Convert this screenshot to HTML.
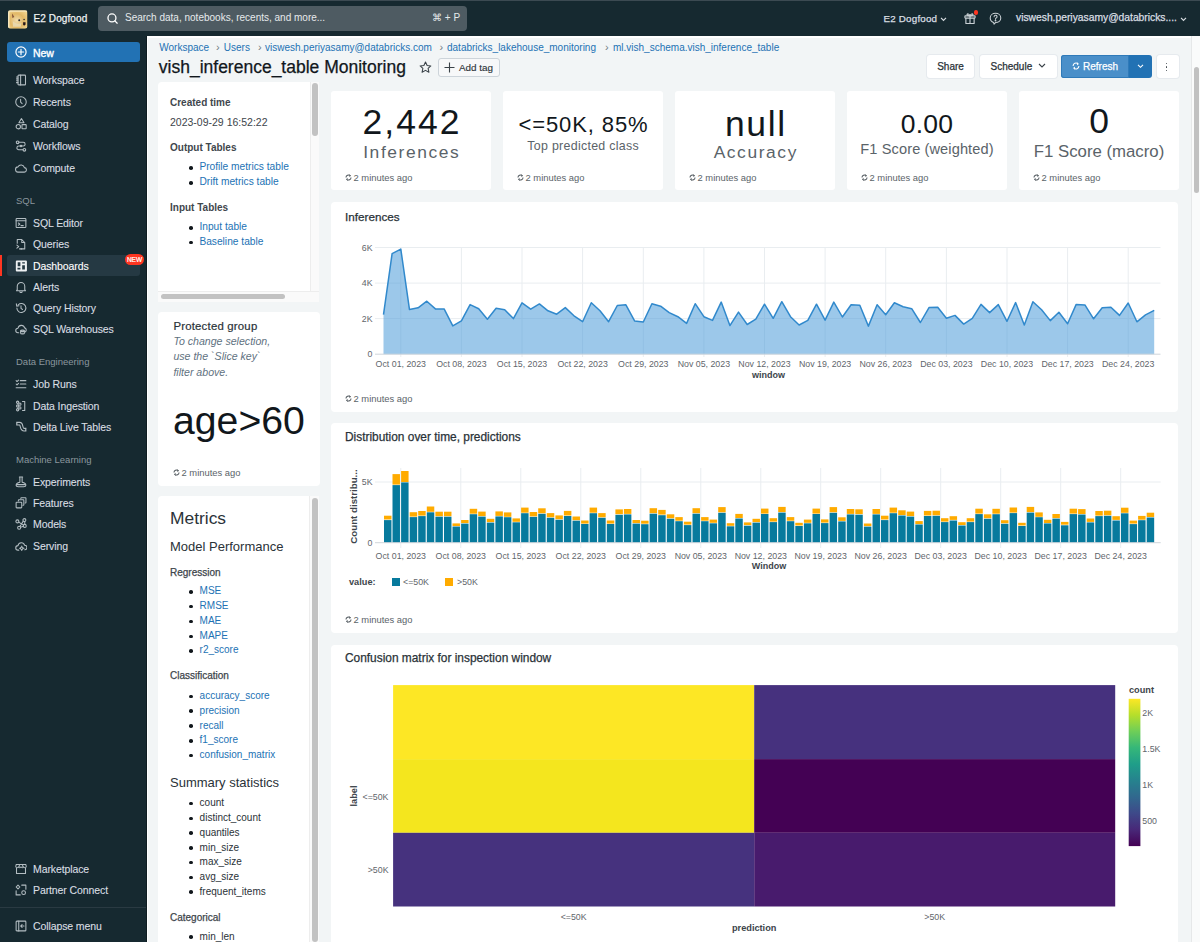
<!DOCTYPE html>
<html><head><meta charset="utf-8">
<style>
*{box-sizing:border-box;margin:0;padding:0}
html,body{width:1200px;height:942px;overflow:hidden}
body{font-family:"Liberation Sans",sans-serif;background:#162930;position:relative;color:#11171c}
.abs{position:absolute}
#top{left:0;top:0;width:1200px;height:36px;background:#162930;border-top:1px solid #3c4a52}
#side{left:0;top:36px;width:147px;height:906px;background:#162930;border-right:1.5px solid #0e1c21}
#main{left:147px;top:36px;width:1045px;height:906px;background:#f2f5f6;border-top:2px solid #fff;border-left:1.5px solid #fff}
#vscroll{left:1191px;top:36px;width:9px;height:906px;background:#fafbfb;border-left:1px solid #e6e8e9}
.txt{position:absolute;white-space:nowrap;line-height:1}
.nav{position:absolute;left:33px;font-size:10.5px;color:#d9dee2;white-space:nowrap;line-height:12px;letter-spacing:-0.1px}
.sec{position:absolute;left:16px;font-size:9.5px;color:#8b979e;white-space:nowrap;line-height:12px}
.ico{position:absolute;left:16px;width:12px;height:12px}
.ico svg{width:12px;height:12px;display:block}
.panel{position:absolute;background:#fff;border-radius:4px}
.link{color:#2272b4}
.med{-webkit-text-stroke-width:0.25px}
.nav{-webkit-text-stroke-width:0.1px}
</style></head><body>
<!-- TOP BAR -->
<div id="top" class="abs">
  <svg class="abs" style="left:8px;top:8.5px" width="19.5" height="19" viewBox="0 0 20 19"><defs><clipPath id="dc"><rect width="20" height="19" rx="2.5"/></clipPath><radialGradient id="dg" cx="45%" cy="55%" r="65%"><stop offset="0" stop-color="#efdcae"/><stop offset=".55" stop-color="#e2b866"/><stop offset="1" stop-color="#f0d48e"/></radialGradient></defs><g clip-path="url(#dc)"><rect width="20" height="19" fill="url(#dg)"/><path d="M0 0h20v1.5H0zM0 0h1.5v19H0z" fill="#f6e7bf"/><path d="M4 3l2.5 4-2 1z" fill="#6d3a2a" opacity=".8"/><path d="M5 11c2 2 5 4 9 2l-1 4H5z" fill="#e9dcb8" opacity=".8"/><circle cx="11.5" cy="10.3" r="1" fill="#2a2a30"/><circle cx="16.5" cy="9.5" r=".8" fill="#2a2a30"/><path d="M15.5 12.2h2.5v2.5c-.5 1-2 1.2-2.5.3z" fill="#25161a"/></g></svg>
  <div class="txt med" style="left:33.5px;top:12.5px;font-size:10px;letter-spacing:0.1px;color:#eef1f3">E2 Dogfood</div>
  <div class="abs" style="left:98px;top:5px;width:369px;height:25px;border-radius:4px;background:#4e5b62"></div>
  <div class="txt" style="left:125px;top:12px;font-size:10px;color:#e6eaec">Search data, notebooks, recents, and more...</div>
  <div class="txt" style="left:432px;top:12px;font-size:10px;color:#e6eaec">⌘ + P</div>
  <div class="txt med" style="left:883.5px;top:13px;font-size:9.8px;letter-spacing:0.2px;color:#d9dee2">E2 Dogfood</div>
  <div class="txt med" style="left:1016px;top:12px;font-size:10.3px;color:#d9dee2">viswesh.periyasamy@databricks....</div>
  <svg class="abs" style="left:107px;top:11.5px" width="11" height="11" viewBox="0 0 16 16" fill="none" stroke="#fff" stroke-width="1.9"><circle cx="7.2" cy="7.2" r="5.8"/><path d="M11.5 11.5l3.3 3.3" stroke-linecap="round"/></svg>
  <svg class="abs" style="left:939.5px;top:15.5px" width="7" height="5" viewBox="0 0 8 6" fill="none" stroke="#d9dee2" stroke-width="1.4"><path d="M1 1l3 3 3-3"/></svg>
  <svg class="abs" style="left:963.5px;top:11px" width="12" height="12.5" viewBox="0 0 16 16.5" fill="none" stroke="#c9d0d4" stroke-width="1.5" stroke-linejoin="round"><rect x="1.2" y="5" width="13.6" height="3" rx=".6"/><path d="M2.5 8v7.3h11V8M8 5v10.3"/><path d="M8 5C7 2.5 4 1.5 4 3.3 4 4.5 6 5 8 5zM8 5c1-2.5 4-3.5 4-1.7C12 4.5 10 5 8 5z"/></svg>
  <div class="abs" style="left:973.8px;top:9.4px;width:4.4px;height:4.4px;border-radius:50%;background:#ff3621"></div>
  <svg class="abs" style="left:989px;top:10.6px" width="13" height="13" viewBox="0 0 16 16" fill="none" stroke="#c9d0d4" stroke-width="1.3" stroke-linejoin="round"><path d="M8 1.5c3.6 0 6.5 2.5 6.5 5.8S11.6 13 8 13l-1.8 2-0.6-2.2C3.2 12 1.5 9.9 1.5 7.3 1.5 4 4.4 1.5 8 1.5z"/><path d="M6.3 5.8a1.8 1.8 0 1 1 2.5 1.6c-.5.3-.8.6-.8 1.2v.4" stroke-linecap="round"/><circle cx="8" cy="10.6" r=".5" fill="#c9d0d4"/></svg>
  <svg class="abs" style="left:1180px;top:15.5px" width="7" height="5" viewBox="0 0 8 6" fill="none" stroke="#d9dee2" stroke-width="1.4"><path d="M1 1l3 3 3-3"/></svg>

</div>
<!-- SIDEBAR -->
<div id="side" class="abs"></div>
<div class="abs" style="left:7px;top:42px;width:133px;height:20px;border-radius:3px;background:#2272b4"></div>
<svg class="abs" style="left:15px;top:46px" width="12" height="12" viewBox="0 0 16 16" fill="none" stroke="#fff" stroke-width="1.6" stroke-linecap="round"><circle cx="8" cy="8" r="6.8"/><path d="M8 4.5v7M4.5 8h7"/></svg>
<div class="nav" style="top:46.5px;color:#fff;font-size:10.5px;-webkit-text-stroke-width:0.35px">New</div>
<div class="abs" style="left:7px;top:255px;width:133px;height:21px;border-radius:3px;background:#253943"></div>
<div class="abs" style="left:0;top:255px;width:2px;height:21px;background:#ff3621"></div>
<div class="abs" style="left:125px;top:254px;width:19px;height:11px;border-radius:6px;background:#ff3621;color:#fff;font-size:6.5px;line-height:11px;text-align:center;-webkit-text-stroke-width:0.2px">NEW</div>
<svg class="abs" style="left:15px;top:73.7px" width="12" height="12" viewBox="0 0 16 16" fill="none" stroke="#b3bdc2" stroke-width="1.4" stroke-linecap="round" stroke-linejoin="round"><rect x="4" y="1.5" width="10" height="13" rx="1"/><path d="M7.5 1.5v13M2 4h2M2 6.5h2M2 9h2M2 11.5h2"/></svg>
<div class="nav" style="top:73.7px;color:#d9dee2">Workspace</div>
<svg class="abs" style="left:15px;top:96.0px" width="12" height="12" viewBox="0 0 16 16" fill="none" stroke="#b3bdc2" stroke-width="1.4" stroke-linecap="round" stroke-linejoin="round"><circle cx="8" cy="8" r="7"/><path d="M7.5 4.5v3.8l2 1.8"/></svg>
<div class="nav" style="top:96.0px;color:#d9dee2">Recents</div>
<svg class="abs" style="left:15px;top:118.0px" width="12" height="12" viewBox="0 0 16 16" fill="none" stroke="#b3bdc2" stroke-width="1.4" stroke-linecap="round" stroke-linejoin="round"><path d="M8.6 0.8l3.4 5.6H5.2z"/><circle cx="4.4" cy="11.6" r="2.9"/><rect x="9.3" y="8.8" width="5.6" height="5.6" rx=".6"/></svg>
<div class="nav" style="top:118.0px;color:#d9dee2">Catalog</div>
<svg class="abs" style="left:15px;top:140.0px" width="12" height="12" viewBox="0 0 16 16" fill="none" stroke="#b3bdc2" stroke-width="1.4" stroke-linecap="round" stroke-linejoin="round"><circle cx="3.5" cy="3" r="1.8"/><circle cx="12.5" cy="13" r="1.8"/><circle cx="8" cy="8" r="1"/><path d="M5.3 3H11a2.5 2.5 0 0 1 0 5H5a2.5 2.5 0 0 0 0 5h5.7"/></svg>
<div class="nav" style="top:140.0px;color:#d9dee2">Workflows</div>
<svg class="abs" style="left:15px;top:162.0px" width="12" height="12" viewBox="0 0 16 16" fill="none" stroke="#b3bdc2" stroke-width="1.4" stroke-linecap="round" stroke-linejoin="round"><path d="M4.5 13.5h7.5a3 3 0 0 0 .5-6A4.5 4.5 0 0 0 4 6.5a3.5 3.5 0 0 0 .5 7z"/></svg>
<div class="nav" style="top:162.0px;color:#d9dee2">Compute</div>
<svg class="abs" style="left:15px;top:216.5px" width="12" height="12" viewBox="0 0 16 16" fill="none" stroke="#b3bdc2" stroke-width="1.4" stroke-linecap="round" stroke-linejoin="round"><rect x="1.5" y="2" width="13" height="12" rx="1"/><path d="M1.5 5h13M4.5 8l2 1.5-2 1.5M8 11.5h3"/></svg>
<div class="nav" style="top:216.5px;color:#d9dee2">SQL Editor</div>
<svg class="abs" style="left:15px;top:238.0px" width="12" height="12" viewBox="0 0 16 16" fill="none" stroke="#b3bdc2" stroke-width="1.4" stroke-linecap="round" stroke-linejoin="round"><path d="M3 7V2h6l4 4v8.5H8M9 2v4h4"/><path d="M2.5 9.5l2.5 2-2.5 2M6 14.5h3"/></svg>
<div class="nav" style="top:238.0px;color:#d9dee2">Queries</div>
<svg class="abs" style="left:15px;top:259.6px" width="12" height="12" viewBox="0 0 16 16" fill="none" stroke="#e8ecef" stroke-width="1.4" stroke-linecap="round" stroke-linejoin="round"><path fill="#eef1f3" stroke="none" fill-rule="evenodd" d="M2.5 0.6h12a1.4 1.4 0 0 1 1.4 1.4v12a1.4 1.4 0 0 1-1.4 1.4h-12A1.4 1.4 0 0 1 1.1 14V2A1.4 1.4 0 0 1 2.5 0.6z M3.6 3h3.6v5.4H3.6z M3.3 10.3h3.9v2.3H3.3z M9.6 3h3.6v1.8H9.6z M9.6 7h3.6v5.6H9.6z"/></svg>
<div class="nav" style="top:259.6px;color:#fff">Dashboards</div>
<svg class="abs" style="left:15px;top:281.0px" width="12" height="12" viewBox="0 0 16 16" fill="none" stroke="#b3bdc2" stroke-width="1.4" stroke-linecap="round" stroke-linejoin="round"><path d="M3 11.5V7a5 5 0 0 1 10 0v4.5l1 1.5H2z"/><path d="M6.5 14a1.5 1.5 0 0 0 3 0"/></svg>
<div class="nav" style="top:281.0px;color:#d9dee2">Alerts</div>
<svg class="abs" style="left:15px;top:302.4px" width="12" height="12" viewBox="0 0 16 16" fill="none" stroke="#b3bdc2" stroke-width="1.4" stroke-linecap="round" stroke-linejoin="round"><path d="M2.5 8a6 6 0 1 0 1.8-4.3"/><path d="M1.8 2.5l.5 3 3-.5M8 5v3.5l2 1.5"/></svg>
<div class="nav" style="top:302.4px;color:#d9dee2">Query History</div>
<svg class="abs" style="left:15px;top:323.0px" width="12" height="12" viewBox="0 0 16 16" fill="none" stroke="#b3bdc2" stroke-width="1.4" stroke-linecap="round" stroke-linejoin="round"><path d="M5 13H4a3 3 0 0 1 0-6 4.5 4.5 0 0 1 8.8-.5A3 3 0 0 1 13.5 12"/><ellipse cx="10" cy="10.5" rx="2.5" ry="1"/><path d="M7.5 10.5v3c0 .6 1.1 1 2.5 1s2.5-.4 2.5-1v-3"/></svg>
<div class="nav" style="top:323.0px;color:#d9dee2">SQL Warehouses</div>
<svg class="abs" style="left:15px;top:378.0px" width="12" height="12" viewBox="0 0 16 16" fill="none" stroke="#b3bdc2" stroke-width="1.4" stroke-linecap="round" stroke-linejoin="round"><path d="M1.5 3.5l1.2 1.2 2-2M7 3.5h7.5M1.5 8l1.2 1.2 2-2M7 8h7.5M1.5 13h13"/></svg>
<div class="nav" style="top:378.0px;color:#d9dee2">Job Runs</div>
<svg class="abs" style="left:15px;top:399.6px" width="12" height="12" viewBox="0 0 16 16" fill="none" stroke="#b3bdc2" stroke-width="1.4" stroke-linecap="round" stroke-linejoin="round"><circle cx="3.5" cy="3" r="1.5"/><circle cx="6.5" cy="5.5" r="1.5"/><circle cx="3.5" cy="8" r="1.5"/><circle cx="6.5" cy="10.5" r="1.5"/><circle cx="3.5" cy="13" r="1.5"/><path d="M10 2h3v12h-3"/></svg>
<div class="nav" style="top:399.6px;color:#d9dee2">Data Ingestion</div>
<svg class="abs" style="left:15px;top:421.0px" width="12" height="12" viewBox="0 0 16 16" fill="none" stroke="#b3bdc2" stroke-width="1.4" stroke-linecap="round" stroke-linejoin="round"><path d="M1.6 3.6H6.3C8.3 3.6 8.4 5.8 9 8.2 9.6 10.6 10 11.6 12.2 11.6H15.2" stroke-width="5" stroke-linecap="butt" stroke-linejoin="round"/><path d="M3.2 3.6H6.3C8.3 3.6 8.4 5.8 9 8.2 9.6 10.6 10 11.6 12.2 11.6H13.6" stroke="#162930" stroke-width="2.1" stroke-linecap="butt"/></svg>
<div class="nav" style="top:421.0px;color:#d9dee2">Delta Live Tables</div>
<svg class="abs" style="left:15px;top:475.6px" width="12" height="12" viewBox="0 0 16 16" fill="none" stroke="#b3bdc2" stroke-width="1.4" stroke-linecap="round" stroke-linejoin="round"><path d="M5.8 1.2h4.4M6.5 1.2v7.2C3.5 9 1.5 10.5 1.5 12.3c0 1.3 1.2 1.9 3 1.9h7c1.8 0 3-.6 3-1.9 0-1.8-2-3.3-5-3.9V1.2"/><path d="M2 11.5h12"/></svg>
<div class="nav" style="top:475.6px;color:#d9dee2">Experiments</div>
<svg class="abs" style="left:15px;top:497.0px" width="12" height="12" viewBox="0 0 16 16" fill="none" stroke="#b3bdc2" stroke-width="1.4" stroke-linecap="round" stroke-linejoin="round"><rect x="1.5" y="7" width="7.5" height="7.5" rx=".8"/><path d="M4.5 5.2V4.5a.8.8 0 0 1 .8-.8H11a.8.8 0 0 1 .8.8v5.8a.8.8 0 0 1-.8.8h-.5"/><path d="M7.8 2V1.8a.8.8 0 0 1 .8-.8h5.2a.8.8 0 0 1 .8.8v5.4a.8.8 0 0 1-.8.8h-.3"/></svg>
<div class="nav" style="top:497.0px;color:#d9dee2">Features</div>
<svg class="abs" style="left:15px;top:518.4px" width="12" height="12" viewBox="0 0 16 16" fill="none" stroke="#b3bdc2" stroke-width="1.4" stroke-linecap="round" stroke-linejoin="round"><circle cx="3.2" cy="4.5" r="2"/><circle cx="12.5" cy="2.8" r="2"/><circle cx="13" cy="10.5" r="2"/><circle cx="5.5" cy="13" r="2"/><path d="M5 5.5l6.2 4M11 4.2L6.5 11.3M13 4.8v3.7M7.4 12.4l3.8-1.3"/></svg>
<div class="nav" style="top:518.4px;color:#d9dee2">Models</div>
<svg class="abs" style="left:15px;top:539.8px" width="12" height="12" viewBox="0 0 16 16" fill="none" stroke="#b3bdc2" stroke-width="1.4" stroke-linecap="round" stroke-linejoin="round"><path d="M5 13.5H4a3 3 0 0 1 0-6 4.5 4.5 0 0 1 8.8-.5A3 3 0 0 1 13 13"/><circle cx="9" cy="11" r="1.7"/><path d="M9 8v1.3M9 12.7V14M6 11h1.3M10.7 11H12"/></svg>
<div class="nav" style="top:539.8px;color:#d9dee2">Serving</div>
<svg class="abs" style="left:15px;top:862.5px" width="12" height="12" viewBox="0 0 16 16" fill="none" stroke="#b3bdc2" stroke-width="1.4" stroke-linecap="round" stroke-linejoin="round"><path d="M2 6.5V14h12V6.5M1.5 2h13l.5 3a1.8 1.8 0 0 1-3.5 0 1.8 1.8 0 0 1-3.5 0 1.8 1.8 0 0 1-3.5 0 1.8 1.8 0 0 1-3.5 0z"/><path d="M6 2L5.5 5M10 2l.5 3"/></svg>
<div class="nav" style="top:862.5px;color:#d9dee2">Marketplace</div>
<svg class="abs" style="left:15px;top:884.4px" width="12" height="12" viewBox="0 0 16 16" fill="none" stroke="#b3bdc2" stroke-width="1.4" stroke-linecap="round" stroke-linejoin="round"><path d="M4 1.5l2.5 2.5L4 6.5 1.5 4z"/><circle cx="11.5" cy="11.5" r="2.5"/><path d="M9 1.5h5.5V7M1.5 9v5.5H7"/></svg>
<div class="nav" style="top:884.4px;color:#d9dee2">Partner Connect</div>
<svg class="abs" style="left:15px;top:919.5px" width="12" height="12" viewBox="0 0 16 16" fill="none" stroke="#b3bdc2" stroke-width="1.4" stroke-linecap="round" stroke-linejoin="round"><rect x="1.5" y="1.5" width="13" height="13" rx="1"/><path d="M5 1.5v13M12 8H7.5M9.5 6L7.5 8l2 2"/></svg>
<div class="nav" style="top:919.5px;color:#d9dee2">Collapse menu</div>
<div class="sec" style="top:194.7px">SQL</div>
<div class="sec" style="top:356.0px">Data Engineering</div>
<div class="sec" style="top:453.5px">Machine Learning</div>
<div class="abs" style="left:0;top:907px;width:146px;height:1px;background:#2a3a42"></div>
<!-- MAIN -->
<div id="main" class="abs"></div>
<div class="txt " style="left:159.3px;top:43.0px;font-size:10px;color:#2272b4;font-weight:normal;">Workspace</div>
<div class="txt " style="left:223.8px;top:43.0px;font-size:10px;color:#2272b4;font-weight:normal;">Users</div>
<div class="txt " style="left:265.0px;top:43.0px;font-size:10px;color:#2272b4;font-weight:normal;">viswesh.periyasamy@databricks.com</div>
<div class="txt " style="left:447.0px;top:43.0px;font-size:10px;color:#2272b4;font-weight:normal;">databricks_lakehouse_monitoring</div>
<div class="txt " style="left:613.0px;top:43.0px;font-size:10px;color:#2272b4;font-weight:normal;">ml.vish_schema.vish_inference_table</div>
<div class="txt " style="left:216.0px;top:42.1px;font-size:11px;color:#6f7b82;font-weight:normal;">›</div>
<div class="txt " style="left:258.0px;top:42.1px;font-size:11px;color:#6f7b82;font-weight:normal;">›</div>
<div class="txt " style="left:439.5px;top:42.1px;font-size:11px;color:#6f7b82;font-weight:normal;">›</div>
<div class="txt " style="left:605.0px;top:42.1px;font-size:11px;color:#6f7b82;font-weight:normal;">›</div>
<div class="txt med" style="left:158.8px;top:59.0px;font-size:17.5px;color:#11171c;font-weight:normal;">vish_inference_table Monitoring</div>
<svg class="abs" style="left:419px;top:61px" width="13" height="13" viewBox="0 0 16 16" fill="none" stroke="#3a4248" stroke-width="1.3" stroke-linejoin="round"><path d="M8 1.3l2 4.3 4.6.5-3.4 3.1 1 4.6L8 11.5l-4.2 2.3 1-4.6L1.4 6.1 6 5.6z"/></svg>
<div class="abs" style="left:437.5px;top:58.3px;width:62.5px;height:18.4px;border:1px solid #cdd4da;border-radius:3px;background:#f7f8f9"></div>
<svg class="abs" style="left:444px;top:61.5px" width="11" height="11" viewBox="0 0 11 11" stroke="#3a4248" stroke-width="1.1"><path d="M5.5 0.5v10M0.5 5.5h10"/></svg>
<div class="txt " style="left:459.0px;top:62.6px;font-size:9.9px;color:#2a3238;font-weight:normal;-webkit-text-stroke-width:0.12px">Add tag</div>
<div class="abs" style="left:927px;top:55px;width:47px;height:22.5px;background:#fff;border-radius:3px;box-shadow:0 0 0 1px #e6eaee"></div>
<div class="txt med" style="left:750.5px;width:400px;text-align:center;top:62.0px;font-size:10px;color:#2a3238;font-weight:normal;">Share</div>
<div class="abs" style="left:980px;top:55px;width:77px;height:22.5px;background:#fff;border-radius:3px;box-shadow:0 0 0 1px #e6eaee"></div>
<div class="txt med" style="left:990.5px;top:62.0px;font-size:10px;color:#2a3238;font-weight:normal;">Schedule</div>
<svg class="abs" style="left:1038px;top:63px" width="8" height="6" viewBox="0 0 8 6" fill="none" stroke="#3a4248" stroke-width="1.1"><path d="M1 1l3 3 3-3"/></svg>
<div class="abs" style="left:1061px;top:54.5px;width:68px;height:23px;background:#4a8fc9;border-radius:3px 0 0 3px;box-shadow:inset 0 0 0 1px #2f7ab9"></div>
<div class="abs" style="left:1129px;top:54.5px;width:23px;height:23px;background:#2272b4;border-radius:0 3px 3px 0"></div>
<svg class="abs" style="left:1072px;top:62px" width="8" height="8" viewBox="0 0 16 16" fill="none" stroke="#fff" stroke-width="2.2"><path d="M13.8 8A5.8 5.8 0 0 1 4 12.2M2.2 8A5.8 5.8 0 0 1 12 3.8"/><path d="M10.2 1.5l2.6 2.4-2.8 2.1M5.8 14.5L3.2 12.1 6 10" stroke-width="2"/></svg>
<div class="txt med" style="left:1083.0px;top:62.1px;font-size:10px;color:#ffffff;font-weight:normal;">Refresh</div>
<svg class="abs" style="left:1137px;top:63.5px" width="7" height="5" viewBox="0 0 8 6" fill="none" stroke="#fff" stroke-width="1.3"><path d="M1 1l3 3 3-3"/></svg>
<div class="abs" style="left:1156.5px;top:55px;width:22px;height:22.5px;background:#fff;border-radius:3px;box-shadow:0 0 0 1px #e6eaee"></div>
<div class="abs" style="left:1165.8px;top:62.5px;width:1.6px;height:1.6px;background:#3a4248;border-radius:1px"></div>
<div class="abs" style="left:1165.8px;top:66px;width:1.6px;height:1.6px;background:#3a4248;border-radius:1px"></div>
<div class="abs" style="left:1165.8px;top:69.5px;width:1.6px;height:1.6px;background:#3a4248;border-radius:1px"></div>
<div class="abs" style="left:158px;top:82px;width:161px;height:219.5px;background:#fff;border-radius:4px 4px 0 0"></div>
<div class="abs" style="left:309.5px;top:82px;width:9.5px;height:209px;background:#fafafa;border-left:1px solid #ededed"></div>
<div class="abs" style="left:312px;top:82.5px;width:5.5px;height:53.5px;background:#c2c2c2;border-radius:3px"></div>
<div class="abs" style="left:158px;top:291px;width:161px;height:10.5px;background:#fafafa;border-top:1px solid #ededed"></div>
<div class="abs" style="left:160.5px;top:294px;width:124.5px;height:5px;background:#c2c2c2;border-radius:3px"></div>
<div class="txt " style="left:170.0px;top:97.5px;font-size:10px;color:#3f474d;font-weight:bold;">Created time</div>
<div class="txt " style="left:170.0px;top:117.2px;font-size:10.5px;color:#3d454b;font-weight:normal;">2023-09-29 16:52:22</div>
<div class="txt " style="left:170.0px;top:142.6px;font-size:10px;color:#3f474d;font-weight:bold;">Output Tables</div>
<div class="abs" style="left:189.2px;top:166.2px;width:3.6px;height:3.6px;background:#11171c;border-radius:50%"></div>
<div class="txt " style="left:199.4px;top:162.4px;font-size:10.2px;color:#2272b4;font-weight:normal;">Profile metrics table</div>
<div class="abs" style="left:189.2px;top:181.1px;width:3.6px;height:3.6px;background:#11171c;border-radius:50%"></div>
<div class="txt " style="left:199.4px;top:177.3px;font-size:10.2px;color:#2272b4;font-weight:normal;">Drift metrics table</div>
<div class="txt " style="left:170.0px;top:203.0px;font-size:10px;color:#3f474d;font-weight:bold;">Input Tables</div>
<div class="abs" style="left:189.2px;top:226.0px;width:3.6px;height:3.6px;background:#11171c;border-radius:50%"></div>
<div class="txt " style="left:199.4px;top:222.2px;font-size:10.2px;color:#2272b4;font-weight:normal;">Input table</div>
<div class="abs" style="left:189.2px;top:240.89999999999998px;width:3.6px;height:3.6px;background:#11171c;border-radius:50%"></div>
<div class="txt " style="left:199.4px;top:237.1px;font-size:10.2px;color:#2272b4;font-weight:normal;">Baseline table</div>
<div class="abs" style="left:158px;top:312px;width:161.5px;height:173.5px;background:#fff;border-radius:4px"></div>
<div class="txt " style="left:173.4px;letter-spacing:0.2px;top:321.1px;font-size:11.4px;color:#2a3238;font-weight:normal;-webkit-text-stroke-width:0.2px">Protected group</div>
<div class="txt " style="left:173.4px;top:336.1px;font-size:10.6px;color:#5f7281;font-weight:normal;font-style:italic">To change selection,</div>
<div class="txt " style="left:173.4px;top:351.0px;font-size:10.6px;color:#5f7281;font-weight:normal;font-style:italic">use the `Slice key`</div>
<div class="txt " style="left:173.4px;top:366.5px;font-size:10.6px;color:#5f7281;font-weight:normal;font-style:italic">filter above.</div>
<div class="txt " style="left:173.0px;top:401.4px;font-size:39.2px;color:#11171c;font-weight:normal;">age&gt;60</div>
<svg class="abs" style="left:172.5px;top:468.79999999999995px" width="7" height="7" viewBox="0 0 16 16" fill="none" stroke="#50585e" stroke-width="2.3"><path d="M13.8 8A5.8 5.8 0 0 1 4 12.2M2.2 8A5.8 5.8 0 0 1 12 3.8"/><path d="M10.2 1.5l2.6 2.4-2.8 2.1M5.8 14.5L3.2 12.1 6 10" stroke-width="2"/></svg>
<div class="txt " style="left:181.5px;top:467.7px;font-size:9.4px;color:#5a6369;font-weight:normal;">2 minutes ago</div>
<div class="abs" style="left:158px;top:496px;width:161px;height:446px;background:#fff;border-radius:4px 4px 0 0"></div>
<div class="abs" style="left:309px;top:496px;width:10px;height:446px;background:#fafafa;border-left:1px solid #ededed"></div>
<div class="abs" style="left:312px;top:498px;width:5.5px;height:444px;background:#c2c2c2;border-radius:3px"></div>
<div class="txt " style="left:170.0px;top:510.1px;font-size:17.4px;color:#2a3238;font-weight:normal;">Metrics</div>
<div class="txt " style="left:170.0px;top:540.1px;font-size:13px;color:#2a3238;font-weight:normal;">Model Performance</div>
<div class="txt med" style="left:170.0px;top:567.5px;font-size:10px;color:#3d454b;font-weight:normal;">Regression</div>
<div class="abs" style="left:189.2px;top:590.0px;width:3.6px;height:3.6px;background:#11171c;border-radius:50%"></div>
<div class="txt " style="left:199.6px;top:586.3px;font-size:10px;color:#2272b4;font-weight:normal;">MSE</div>
<div class="abs" style="left:189.2px;top:604.7px;width:3.6px;height:3.6px;background:#11171c;border-radius:50%"></div>
<div class="txt " style="left:199.6px;top:601.0px;font-size:10px;color:#2272b4;font-weight:normal;">RMSE</div>
<div class="abs" style="left:189.2px;top:619.8000000000001px;width:3.6px;height:3.6px;background:#11171c;border-radius:50%"></div>
<div class="txt " style="left:199.6px;top:616.1px;font-size:10px;color:#2272b4;font-weight:normal;">MAE</div>
<div class="abs" style="left:189.2px;top:634.5px;width:3.6px;height:3.6px;background:#11171c;border-radius:50%"></div>
<div class="txt " style="left:199.6px;top:630.8px;font-size:10px;color:#2272b4;font-weight:normal;">MAPE</div>
<div class="abs" style="left:189.2px;top:649.1px;width:3.6px;height:3.6px;background:#11171c;border-radius:50%"></div>
<div class="txt " style="left:199.6px;top:645.4px;font-size:10px;color:#2272b4;font-weight:normal;">r2_score</div>
<div class="txt med" style="left:170.0px;top:671.3px;font-size:10px;color:#3d454b;font-weight:normal;">Classification</div>
<div class="abs" style="left:189.2px;top:694.5px;width:3.6px;height:3.6px;background:#11171c;border-radius:50%"></div>
<div class="txt " style="left:199.6px;top:690.8px;font-size:10px;color:#2272b4;font-weight:normal;">accuracy_score</div>
<div class="abs" style="left:189.2px;top:709.4000000000001px;width:3.6px;height:3.6px;background:#11171c;border-radius:50%"></div>
<div class="txt " style="left:199.6px;top:705.7px;font-size:10px;color:#2272b4;font-weight:normal;">precision</div>
<div class="abs" style="left:189.2px;top:724.2px;width:3.6px;height:3.6px;background:#11171c;border-radius:50%"></div>
<div class="txt " style="left:199.6px;top:720.5px;font-size:10px;color:#2272b4;font-weight:normal;">recall</div>
<div class="abs" style="left:189.2px;top:739.0px;width:3.6px;height:3.6px;background:#11171c;border-radius:50%"></div>
<div class="txt " style="left:199.6px;top:735.3px;font-size:10px;color:#2272b4;font-weight:normal;">f1_score</div>
<div class="abs" style="left:189.2px;top:753.7px;width:3.6px;height:3.6px;background:#11171c;border-radius:50%"></div>
<div class="txt " style="left:199.6px;top:750.0px;font-size:10px;color:#2272b4;font-weight:normal;">confusion_matrix</div>
<div class="txt " style="left:170.0px;top:775.7px;font-size:13px;color:#2a3238;font-weight:normal;">Summary statistics</div>
<div class="abs" style="left:189.2px;top:801.8000000000001px;width:3.6px;height:3.6px;background:#11171c;border-radius:50%"></div>
<div class="txt " style="left:199.6px;top:798.1px;font-size:10px;color:#2a3238;font-weight:normal;">count</div>
<div class="abs" style="left:189.2px;top:816.7px;width:3.6px;height:3.6px;background:#11171c;border-radius:50%"></div>
<div class="txt " style="left:199.6px;top:813.0px;font-size:10px;color:#2a3238;font-weight:normal;">distinct_count</div>
<div class="abs" style="left:189.2px;top:831.4000000000001px;width:3.6px;height:3.6px;background:#11171c;border-radius:50%"></div>
<div class="txt " style="left:199.6px;top:827.7px;font-size:10px;color:#2a3238;font-weight:normal;">quantiles</div>
<div class="abs" style="left:189.2px;top:846.3000000000001px;width:3.6px;height:3.6px;background:#11171c;border-radius:50%"></div>
<div class="txt " style="left:199.6px;top:842.6px;font-size:10px;color:#2a3238;font-weight:normal;">min_size</div>
<div class="abs" style="left:189.2px;top:860.9000000000001px;width:3.6px;height:3.6px;background:#11171c;border-radius:50%"></div>
<div class="txt " style="left:199.6px;top:857.2px;font-size:10px;color:#2a3238;font-weight:normal;">max_size</div>
<div class="abs" style="left:189.2px;top:875.7px;width:3.6px;height:3.6px;background:#11171c;border-radius:50%"></div>
<div class="txt " style="left:199.6px;top:872.0px;font-size:10px;color:#2a3238;font-weight:normal;">avg_size</div>
<div class="abs" style="left:189.2px;top:890.4000000000001px;width:3.6px;height:3.6px;background:#11171c;border-radius:50%"></div>
<div class="txt " style="left:199.6px;top:886.7px;font-size:10px;color:#2a3238;font-weight:normal;">frequent_items</div>
<div class="txt med" style="left:170.0px;top:913.1px;font-size:10px;color:#3d454b;font-weight:normal;">Categorical</div>
<div class="abs" style="left:189.2px;top:935.3000000000001px;width:3.6px;height:3.6px;background:#11171c;border-radius:50%"></div>
<div class="txt " style="left:199.6px;top:931.6px;font-size:10px;color:#2a3238;font-weight:normal;">min_len</div>
<div class="abs" style="left:330.5px;top:91px;width:160.5px;height:99.3px;background:#fff;border-radius:3px"></div>
<svg class="abs" style="left:345.0px;top:174.1px" width="7" height="7" viewBox="0 0 16 16" fill="none" stroke="#50585e" stroke-width="2.3"><path d="M13.8 8A5.8 5.8 0 0 1 4 12.2M2.2 8A5.8 5.8 0 0 1 12 3.8"/><path d="M10.2 1.5l2.6 2.4-2.8 2.1M5.8 14.5L3.2 12.1 6 10" stroke-width="2"/></svg>
<div class="txt " style="left:353.5px;top:173.0px;font-size:9.4px;color:#5a6369;font-weight:normal;">2 minutes ago</div>
<div class="abs" style="left:502.5px;top:91px;width:160.5px;height:99.3px;background:#fff;border-radius:3px"></div>
<svg class="abs" style="left:517.0px;top:174.1px" width="7" height="7" viewBox="0 0 16 16" fill="none" stroke="#50585e" stroke-width="2.3"><path d="M13.8 8A5.8 5.8 0 0 1 4 12.2M2.2 8A5.8 5.8 0 0 1 12 3.8"/><path d="M10.2 1.5l2.6 2.4-2.8 2.1M5.8 14.5L3.2 12.1 6 10" stroke-width="2"/></svg>
<div class="txt " style="left:525.5px;top:173.0px;font-size:9.4px;color:#5a6369;font-weight:normal;">2 minutes ago</div>
<div class="abs" style="left:674.5px;top:91px;width:160.5px;height:99.3px;background:#fff;border-radius:3px"></div>
<svg class="abs" style="left:689.0px;top:174.1px" width="7" height="7" viewBox="0 0 16 16" fill="none" stroke="#50585e" stroke-width="2.3"><path d="M13.8 8A5.8 5.8 0 0 1 4 12.2M2.2 8A5.8 5.8 0 0 1 12 3.8"/><path d="M10.2 1.5l2.6 2.4-2.8 2.1M5.8 14.5L3.2 12.1 6 10" stroke-width="2"/></svg>
<div class="txt " style="left:697.5px;top:173.0px;font-size:9.4px;color:#5a6369;font-weight:normal;">2 minutes ago</div>
<div class="abs" style="left:846.5px;top:91px;width:160.5px;height:99.3px;background:#fff;border-radius:3px"></div>
<svg class="abs" style="left:861.0px;top:174.1px" width="7" height="7" viewBox="0 0 16 16" fill="none" stroke="#50585e" stroke-width="2.3"><path d="M13.8 8A5.8 5.8 0 0 1 4 12.2M2.2 8A5.8 5.8 0 0 1 12 3.8"/><path d="M10.2 1.5l2.6 2.4-2.8 2.1M5.8 14.5L3.2 12.1 6 10" stroke-width="2"/></svg>
<div class="txt " style="left:869.5px;top:173.0px;font-size:9.4px;color:#5a6369;font-weight:normal;">2 minutes ago</div>
<div class="abs" style="left:1018.5px;top:91px;width:160.5px;height:99.3px;background:#fff;border-radius:3px"></div>
<svg class="abs" style="left:1033.0px;top:174.1px" width="7" height="7" viewBox="0 0 16 16" fill="none" stroke="#50585e" stroke-width="2.3"><path d="M13.8 8A5.8 5.8 0 0 1 4 12.2M2.2 8A5.8 5.8 0 0 1 12 3.8"/><path d="M10.2 1.5l2.6 2.4-2.8 2.1M5.8 14.5L3.2 12.1 6 10" stroke-width="2"/></svg>
<div class="txt " style="left:1041.5px;top:173.0px;font-size:9.4px;color:#5a6369;font-weight:normal;">2 minutes ago</div>
<div class="txt" style="left:330.5px;width:161px;text-align:center;top:105.3px;font-size:35.5px;letter-spacing:2px;text-indent:2px;color:#11171c">2,442</div>
<div class="txt" style="left:330.5px;width:161px;text-align:center;top:143.5px;font-size:17.4px;letter-spacing:1.6px;text-indent:1.6px;color:#5a6369">Inferences</div>
<div class="txt" style="left:502.5px;width:161px;text-align:center;top:114.3px;font-size:22px;letter-spacing:0.9px;text-indent:0.9px;color:#11171c">&lt;=50K, 85%</div>
<div class="txt" style="left:502.5px;width:161px;text-align:center;top:139.5px;font-size:12.4px;letter-spacing:0.3px;text-indent:0.3px;color:#5a6369">Top predicted class</div>
<div class="txt" style="left:674.5px;width:161px;text-align:center;top:107px;font-size:35.5px;letter-spacing:1.6px;text-indent:1.6px;color:#11171c">null</div>
<div class="txt" style="left:674.5px;width:161px;text-align:center;top:143.5px;font-size:17.4px;letter-spacing:1.6px;text-indent:1.6px;color:#5a6369">Accuracy</div>
<div class="txt" style="left:846.5px;width:161px;text-align:center;top:111px;font-size:26.5px;letter-spacing:0.2px;color:#11171c">0.00</div>
<div class="txt" style="left:846.5px;width:161px;text-align:center;top:142px;font-size:14.6px;letter-spacing:0.1px;color:#5a6369">F1 Score (weighted)</div>
<div class="txt" style="left:1018.5px;width:161px;text-align:center;top:103.5px;font-size:35.5px;color:#11171c">0</div>
<div class="txt" style="left:1018.5px;width:161px;text-align:center;top:143.5px;font-size:16.8px;color:#5a6369">F1 Score (macro)</div>
<div class="abs" style="left:330.5px;top:201.5px;width:847.8px;height:210.5px;background:#fff;border-radius:4px"></div>
<div class="txt med" style="left:345.0px;top:210.7px;font-size:11.7px;color:#2a3238;font-weight:normal;">Inferences</div>
<svg class="abs" style="left:345px;top:394.59999999999997px" width="7" height="7" viewBox="0 0 16 16" fill="none" stroke="#50585e" stroke-width="2.3"><path d="M13.8 8A5.8 5.8 0 0 1 4 12.2M2.2 8A5.8 5.8 0 0 1 12 3.8"/><path d="M10.2 1.5l2.6 2.4-2.8 2.1M5.8 14.5L3.2 12.1 6 10" stroke-width="2"/></svg>
<div class="txt " style="left:353.5px;top:393.5px;font-size:9.4px;color:#5a6369;font-weight:normal;">2 minutes ago</div>
<div class="abs" style="left:330.5px;top:423px;width:847.8px;height:209.5px;background:#fff;border-radius:4px"></div>
<div class="txt med" style="left:345.0px;top:431.6px;font-size:11.9px;color:#2a3238;font-weight:normal;">Distribution over time, predictions</div>
<svg class="abs" style="left:345px;top:615.6999999999999px" width="7" height="7" viewBox="0 0 16 16" fill="none" stroke="#50585e" stroke-width="2.3"><path d="M13.8 8A5.8 5.8 0 0 1 4 12.2M2.2 8A5.8 5.8 0 0 1 12 3.8"/><path d="M10.2 1.5l2.6 2.4-2.8 2.1M5.8 14.5L3.2 12.1 6 10" stroke-width="2"/></svg>
<div class="txt " style="left:353.5px;top:614.6px;font-size:9.4px;color:#5a6369;font-weight:normal;">2 minutes ago</div>
<div class="abs" style="left:330.5px;top:644.5px;width:847.8px;height:300px;background:#fff;border-radius:4px"></div>
<div class="txt med" style="left:345.0px;top:652.8px;font-size:11.9px;color:#2a3238;font-weight:normal;">Confusion matrix for inspection window</div>
<svg class="abs" style="left:0;top:0" width="1200" height="942" viewBox="0 0 1200 942" font-family="Liberation Sans, sans-serif">
<line x1="375" x2="1160.5" y1="318.6" y2="318.6" stroke="#e9edf0" stroke-width="1"/>
<line x1="375" x2="1160.5" y1="283.1" y2="283.1" stroke="#e9edf0" stroke-width="1"/>
<line x1="375" x2="1160.5" y1="247.5" y2="247.5" stroke="#e9edf0" stroke-width="1"/>
<line x1="400.8" x2="400.8" y1="247.5" y2="357" stroke="#e9edf0" stroke-width="1"/>
<line x1="461.4" x2="461.4" y1="247.5" y2="357" stroke="#e9edf0" stroke-width="1"/>
<line x1="522.0" x2="522.0" y1="247.5" y2="357" stroke="#e9edf0" stroke-width="1"/>
<line x1="582.6" x2="582.6" y1="247.5" y2="357" stroke="#e9edf0" stroke-width="1"/>
<line x1="643.3" x2="643.3" y1="247.5" y2="357" stroke="#e9edf0" stroke-width="1"/>
<line x1="703.9" x2="703.9" y1="247.5" y2="357" stroke="#e9edf0" stroke-width="1"/>
<line x1="764.5" x2="764.5" y1="247.5" y2="357" stroke="#e9edf0" stroke-width="1"/>
<line x1="825.1" x2="825.1" y1="247.5" y2="357" stroke="#e9edf0" stroke-width="1"/>
<line x1="885.7" x2="885.7" y1="247.5" y2="357" stroke="#e9edf0" stroke-width="1"/>
<line x1="946.4" x2="946.4" y1="247.5" y2="357" stroke="#e9edf0" stroke-width="1"/>
<line x1="1007.0" x2="1007.0" y1="247.5" y2="357" stroke="#e9edf0" stroke-width="1"/>
<line x1="1067.6" x2="1067.6" y1="247.5" y2="357" stroke="#e9edf0" stroke-width="1"/>
<line x1="1128.2" x2="1128.2" y1="247.5" y2="357" stroke="#e9edf0" stroke-width="1"/>
<polygon points="383.5,354.2 383.5,314.7 392.1,253.7 400.8,249.1 409.5,309.6 418.1,307.8 426.8,301.2 435.4,308.9 444.1,308.9 452.8,325.9 461.4,320.9 470.1,304.6 478.7,308.7 487.4,319.2 496.1,308.3 504.7,309.7 513.4,318.6 522.0,302.8 530.7,309.2 539.4,303.9 548.0,310.8 556.7,314.2 565.3,307.6 574.0,315.8 582.6,321.7 591.3,302.8 600.0,310.8 608.6,321.7 617.3,305.5 625.9,304.8 634.6,320.9 643.3,322.0 651.9,303.7 660.6,306.2 669.2,312.6 677.9,316.7 686.6,323.4 695.2,303.7 703.9,316.7 712.5,320.4 721.2,302.1 729.9,325.6 738.5,312.1 747.2,324.5 755.8,319.2 764.5,304.2 773.2,318.3 781.8,301.7 790.5,316.7 799.1,325.0 807.8,320.4 816.5,304.2 825.1,320.1 833.8,302.1 842.4,317.0 851.1,304.8 859.8,305.3 868.4,326.1 877.1,304.8 885.7,314.7 894.4,302.8 903.1,306.7 911.7,308.7 920.4,322.5 929.0,307.6 937.7,307.3 946.4,318.3 955.0,315.4 963.7,324.1 972.3,318.3 981.0,304.4 989.6,312.6 998.3,304.6 1007.0,321.3 1015.6,302.6 1024.3,325.0 1032.9,301.7 1041.6,309.7 1050.3,320.6 1058.9,312.2 1067.6,323.8 1076.2,304.4 1084.9,304.9 1093.6,318.8 1102.2,307.8 1110.9,307.3 1119.5,315.4 1128.2,303.0 1136.9,321.8 1145.5,314.9 1154.2,310.3 1154.2,354.2" fill="#4a9ad8" fill-opacity="0.55"/>
<polyline points="383.5,314.7 392.1,253.7 400.8,249.1 409.5,309.6 418.1,307.8 426.8,301.2 435.4,308.9 444.1,308.9 452.8,325.9 461.4,320.9 470.1,304.6 478.7,308.7 487.4,319.2 496.1,308.3 504.7,309.7 513.4,318.6 522.0,302.8 530.7,309.2 539.4,303.9 548.0,310.8 556.7,314.2 565.3,307.6 574.0,315.8 582.6,321.7 591.3,302.8 600.0,310.8 608.6,321.7 617.3,305.5 625.9,304.8 634.6,320.9 643.3,322.0 651.9,303.7 660.6,306.2 669.2,312.6 677.9,316.7 686.6,323.4 695.2,303.7 703.9,316.7 712.5,320.4 721.2,302.1 729.9,325.6 738.5,312.1 747.2,324.5 755.8,319.2 764.5,304.2 773.2,318.3 781.8,301.7 790.5,316.7 799.1,325.0 807.8,320.4 816.5,304.2 825.1,320.1 833.8,302.1 842.4,317.0 851.1,304.8 859.8,305.3 868.4,326.1 877.1,304.8 885.7,314.7 894.4,302.8 903.1,306.7 911.7,308.7 920.4,322.5 929.0,307.6 937.7,307.3 946.4,318.3 955.0,315.4 963.7,324.1 972.3,318.3 981.0,304.4 989.6,312.6 998.3,304.6 1007.0,321.3 1015.6,302.6 1024.3,325.0 1032.9,301.7 1041.6,309.7 1050.3,320.6 1058.9,312.2 1067.6,323.8 1076.2,304.4 1084.9,304.9 1093.6,318.8 1102.2,307.8 1110.9,307.3 1119.5,315.4 1128.2,303.0 1136.9,321.8 1145.5,314.9 1154.2,310.3" fill="none" stroke="#3189cc" stroke-width="1.5" stroke-linejoin="round"/>
<line x1="375" x2="1160.5" y1="354.2" y2="354.2" stroke="#cfd6db" stroke-width="1"/>
<text x="372.5" y="357.4" font-size="8.8" fill="#5f666b" text-anchor="end">0</text>
<text x="372.5" y="321.8" font-size="8.8" fill="#5f666b" text-anchor="end">2K</text>
<text x="372.5" y="286.3" font-size="8.8" fill="#5f666b" text-anchor="end">4K</text>
<text x="372.5" y="250.7" font-size="8.8" fill="#5f666b" text-anchor="end">6K</text>
<text x="400.8" y="366.5" font-size="8.8" fill="#5f666b" text-anchor="middle">Oct 01, 2023</text>
<text x="461.4" y="366.5" font-size="8.8" fill="#5f666b" text-anchor="middle">Oct 08, 2023</text>
<text x="522.0" y="366.5" font-size="8.8" fill="#5f666b" text-anchor="middle">Oct 15, 2023</text>
<text x="582.6" y="366.5" font-size="8.8" fill="#5f666b" text-anchor="middle">Oct 22, 2023</text>
<text x="643.3" y="366.5" font-size="8.8" fill="#5f666b" text-anchor="middle">Oct 29, 2023</text>
<text x="703.9" y="366.5" font-size="8.8" fill="#5f666b" text-anchor="middle">Nov 05, 2023</text>
<text x="764.5" y="366.5" font-size="8.8" fill="#5f666b" text-anchor="middle">Nov 12, 2023</text>
<text x="825.1" y="366.5" font-size="8.8" fill="#5f666b" text-anchor="middle">Nov 19, 2023</text>
<text x="885.7" y="366.5" font-size="8.8" fill="#5f666b" text-anchor="middle">Nov 26, 2023</text>
<text x="946.4" y="366.5" font-size="8.8" fill="#5f666b" text-anchor="middle">Dec 03, 2023</text>
<text x="1007.0" y="366.5" font-size="8.8" fill="#5f666b" text-anchor="middle">Dec 10, 2023</text>
<text x="1067.6" y="366.5" font-size="8.8" fill="#5f666b" text-anchor="middle">Dec 17, 2023</text>
<text x="1128.2" y="366.5" font-size="8.8" fill="#5f666b" text-anchor="middle">Dec 24, 2023</text>
<text x="768.5" y="377.7" font-size="9" font-weight="bold" fill="#3d454b" text-anchor="middle">window</text>
<line x1="375" x2="1160.7" y1="482" y2="482" stroke="#e9edf0" stroke-width="1"/>
<line x1="400.8" x2="400.8" y1="468" y2="548" stroke="#e9edf0" stroke-width="1"/>
<line x1="460.8" x2="460.8" y1="468" y2="548" stroke="#e9edf0" stroke-width="1"/>
<line x1="520.8" x2="520.8" y1="468" y2="548" stroke="#e9edf0" stroke-width="1"/>
<line x1="580.8" x2="580.8" y1="468" y2="548" stroke="#e9edf0" stroke-width="1"/>
<line x1="640.8" x2="640.8" y1="468" y2="548" stroke="#e9edf0" stroke-width="1"/>
<line x1="700.8" x2="700.8" y1="468" y2="548" stroke="#e9edf0" stroke-width="1"/>
<line x1="760.8" x2="760.8" y1="468" y2="548" stroke="#e9edf0" stroke-width="1"/>
<line x1="820.7" x2="820.7" y1="468" y2="548" stroke="#e9edf0" stroke-width="1"/>
<line x1="880.7" x2="880.7" y1="468" y2="548" stroke="#e9edf0" stroke-width="1"/>
<line x1="940.7" x2="940.7" y1="468" y2="548" stroke="#e9edf0" stroke-width="1"/>
<line x1="1000.7" x2="1000.7" y1="468" y2="548" stroke="#e9edf0" stroke-width="1"/>
<line x1="1060.7" x2="1060.7" y1="468" y2="548" stroke="#e9edf0" stroke-width="1"/>
<line x1="1120.7" x2="1120.7" y1="468" y2="548" stroke="#e9edf0" stroke-width="1"/>
<rect x="384.0" y="515.7" width="7.47" height="3.8" fill="#ffab00"/>
<rect x="384.0" y="520.1" width="7.47" height="22.6" fill="#077a9d"/>
<rect x="392.5" y="474.1" width="7.47" height="10.5" fill="#ffab00"/>
<rect x="392.5" y="485.1" width="7.47" height="57.6" fill="#077a9d"/>
<rect x="401.1" y="471.0" width="7.47" height="11.0" fill="#ffab00"/>
<rect x="401.1" y="482.4" width="7.47" height="60.3" fill="#077a9d"/>
<rect x="409.7" y="512.2" width="7.47" height="4.4" fill="#ffab00"/>
<rect x="409.7" y="517.1" width="7.47" height="25.6" fill="#077a9d"/>
<rect x="418.2" y="511.0" width="7.47" height="4.6" fill="#ffab00"/>
<rect x="418.2" y="516.1" width="7.47" height="26.6" fill="#077a9d"/>
<rect x="426.8" y="506.5" width="7.47" height="5.3" fill="#ffab00"/>
<rect x="426.8" y="512.3" width="7.47" height="30.4" fill="#077a9d"/>
<rect x="435.4" y="511.7" width="7.47" height="4.5" fill="#ffab00"/>
<rect x="435.4" y="516.7" width="7.47" height="26.0" fill="#077a9d"/>
<rect x="444.0" y="511.7" width="7.47" height="4.5" fill="#ffab00"/>
<rect x="444.0" y="516.7" width="7.47" height="26.0" fill="#077a9d"/>
<rect x="452.5" y="523.4" width="7.47" height="2.6" fill="#ffab00"/>
<rect x="452.5" y="526.5" width="7.47" height="16.2" fill="#077a9d"/>
<rect x="461.1" y="520.0" width="7.47" height="3.1" fill="#ffab00"/>
<rect x="461.1" y="523.6" width="7.47" height="19.1" fill="#077a9d"/>
<rect x="469.7" y="508.8" width="7.47" height="4.9" fill="#ffab00"/>
<rect x="469.7" y="514.2" width="7.47" height="28.5" fill="#077a9d"/>
<rect x="478.2" y="511.6" width="7.47" height="4.5" fill="#ffab00"/>
<rect x="478.2" y="516.6" width="7.47" height="26.1" fill="#077a9d"/>
<rect x="486.8" y="518.8" width="7.47" height="3.3" fill="#ffab00"/>
<rect x="486.8" y="522.6" width="7.47" height="20.1" fill="#077a9d"/>
<rect x="495.4" y="511.4" width="7.47" height="4.5" fill="#ffab00"/>
<rect x="495.4" y="516.4" width="7.47" height="26.3" fill="#077a9d"/>
<rect x="503.9" y="512.4" width="7.47" height="4.4" fill="#ffab00"/>
<rect x="503.9" y="517.2" width="7.47" height="25.5" fill="#077a9d"/>
<rect x="512.5" y="518.4" width="7.47" height="3.4" fill="#ffab00"/>
<rect x="512.5" y="522.3" width="7.47" height="20.4" fill="#077a9d"/>
<rect x="521.1" y="507.6" width="7.47" height="5.1" fill="#ffab00"/>
<rect x="521.1" y="513.2" width="7.47" height="29.5" fill="#077a9d"/>
<rect x="529.7" y="512.0" width="7.47" height="4.4" fill="#ffab00"/>
<rect x="529.7" y="516.9" width="7.47" height="25.8" fill="#077a9d"/>
<rect x="538.2" y="508.3" width="7.47" height="5.0" fill="#ffab00"/>
<rect x="538.2" y="513.8" width="7.47" height="28.9" fill="#077a9d"/>
<rect x="546.8" y="513.1" width="7.47" height="4.2" fill="#ffab00"/>
<rect x="546.8" y="517.8" width="7.47" height="24.9" fill="#077a9d"/>
<rect x="555.4" y="515.4" width="7.47" height="3.9" fill="#ffab00"/>
<rect x="555.4" y="519.8" width="7.47" height="22.9" fill="#077a9d"/>
<rect x="563.9" y="510.9" width="7.47" height="4.6" fill="#ffab00"/>
<rect x="563.9" y="516.0" width="7.47" height="26.7" fill="#077a9d"/>
<rect x="572.5" y="516.5" width="7.47" height="3.7" fill="#ffab00"/>
<rect x="572.5" y="520.7" width="7.47" height="22.0" fill="#077a9d"/>
<rect x="581.1" y="520.5" width="7.47" height="3.1" fill="#ffab00"/>
<rect x="581.1" y="524.0" width="7.47" height="18.7" fill="#077a9d"/>
<rect x="589.6" y="507.6" width="7.47" height="5.1" fill="#ffab00"/>
<rect x="589.6" y="513.2" width="7.47" height="29.5" fill="#077a9d"/>
<rect x="598.2" y="513.1" width="7.47" height="4.2" fill="#ffab00"/>
<rect x="598.2" y="517.8" width="7.47" height="24.9" fill="#077a9d"/>
<rect x="606.8" y="520.5" width="7.47" height="3.1" fill="#ffab00"/>
<rect x="606.8" y="524.0" width="7.47" height="18.7" fill="#077a9d"/>
<rect x="615.4" y="509.4" width="7.47" height="4.8" fill="#ffab00"/>
<rect x="615.4" y="514.8" width="7.47" height="27.9" fill="#077a9d"/>
<rect x="623.9" y="509.0" width="7.47" height="4.9" fill="#ffab00"/>
<rect x="623.9" y="514.4" width="7.47" height="28.3" fill="#077a9d"/>
<rect x="632.5" y="520.0" width="7.47" height="3.1" fill="#ffab00"/>
<rect x="632.5" y="523.6" width="7.47" height="19.1" fill="#077a9d"/>
<rect x="641.1" y="520.7" width="7.47" height="3.0" fill="#ffab00"/>
<rect x="641.1" y="524.2" width="7.47" height="18.5" fill="#077a9d"/>
<rect x="649.6" y="508.2" width="7.47" height="5.0" fill="#ffab00"/>
<rect x="649.6" y="513.7" width="7.47" height="29.0" fill="#077a9d"/>
<rect x="658.2" y="509.9" width="7.47" height="4.7" fill="#ffab00"/>
<rect x="658.2" y="515.2" width="7.47" height="27.5" fill="#077a9d"/>
<rect x="666.8" y="514.3" width="7.47" height="4.0" fill="#ffab00"/>
<rect x="666.8" y="518.8" width="7.47" height="23.9" fill="#077a9d"/>
<rect x="675.3" y="517.1" width="7.47" height="3.6" fill="#ffab00"/>
<rect x="675.3" y="521.2" width="7.47" height="21.5" fill="#077a9d"/>
<rect x="683.9" y="521.7" width="7.47" height="2.9" fill="#ffab00"/>
<rect x="683.9" y="525.1" width="7.47" height="17.6" fill="#077a9d"/>
<rect x="692.5" y="508.2" width="7.47" height="5.0" fill="#ffab00"/>
<rect x="692.5" y="513.7" width="7.47" height="29.0" fill="#077a9d"/>
<rect x="701.1" y="517.1" width="7.47" height="3.6" fill="#ffab00"/>
<rect x="701.1" y="521.2" width="7.47" height="21.5" fill="#077a9d"/>
<rect x="709.6" y="519.6" width="7.47" height="3.2" fill="#ffab00"/>
<rect x="709.6" y="523.3" width="7.47" height="19.4" fill="#077a9d"/>
<rect x="718.2" y="507.1" width="7.47" height="5.2" fill="#ffab00"/>
<rect x="718.2" y="512.8" width="7.47" height="29.9" fill="#077a9d"/>
<rect x="726.8" y="523.2" width="7.47" height="2.6" fill="#ffab00"/>
<rect x="726.8" y="526.3" width="7.47" height="16.4" fill="#077a9d"/>
<rect x="735.3" y="513.9" width="7.47" height="4.1" fill="#ffab00"/>
<rect x="735.3" y="518.5" width="7.47" height="24.2" fill="#077a9d"/>
<rect x="743.9" y="522.4" width="7.47" height="2.7" fill="#ffab00"/>
<rect x="743.9" y="525.7" width="7.47" height="17.0" fill="#077a9d"/>
<rect x="752.5" y="518.8" width="7.47" height="3.3" fill="#ffab00"/>
<rect x="752.5" y="522.6" width="7.47" height="20.1" fill="#077a9d"/>
<rect x="761.0" y="508.6" width="7.47" height="5.0" fill="#ffab00"/>
<rect x="761.0" y="514.0" width="7.47" height="28.7" fill="#077a9d"/>
<rect x="769.6" y="518.2" width="7.47" height="3.4" fill="#ffab00"/>
<rect x="769.6" y="522.1" width="7.47" height="20.6" fill="#077a9d"/>
<rect x="778.2" y="506.9" width="7.47" height="5.2" fill="#ffab00"/>
<rect x="778.2" y="512.6" width="7.47" height="30.1" fill="#077a9d"/>
<rect x="786.8" y="517.1" width="7.47" height="3.6" fill="#ffab00"/>
<rect x="786.8" y="521.2" width="7.47" height="21.5" fill="#077a9d"/>
<rect x="795.3" y="522.8" width="7.47" height="2.7" fill="#ffab00"/>
<rect x="795.3" y="526.0" width="7.47" height="16.7" fill="#077a9d"/>
<rect x="803.9" y="519.6" width="7.47" height="3.2" fill="#ffab00"/>
<rect x="803.9" y="523.3" width="7.47" height="19.4" fill="#077a9d"/>
<rect x="812.5" y="508.6" width="7.47" height="5.0" fill="#ffab00"/>
<rect x="812.5" y="514.0" width="7.47" height="28.7" fill="#077a9d"/>
<rect x="821.0" y="519.4" width="7.47" height="3.2" fill="#ffab00"/>
<rect x="821.0" y="523.1" width="7.47" height="19.6" fill="#077a9d"/>
<rect x="829.6" y="507.1" width="7.47" height="5.2" fill="#ffab00"/>
<rect x="829.6" y="512.8" width="7.47" height="29.9" fill="#077a9d"/>
<rect x="838.2" y="517.3" width="7.47" height="3.6" fill="#ffab00"/>
<rect x="838.2" y="521.4" width="7.47" height="21.3" fill="#077a9d"/>
<rect x="846.8" y="509.0" width="7.47" height="4.9" fill="#ffab00"/>
<rect x="846.8" y="514.4" width="7.47" height="28.3" fill="#077a9d"/>
<rect x="855.3" y="509.3" width="7.47" height="4.8" fill="#ffab00"/>
<rect x="855.3" y="514.7" width="7.47" height="28.0" fill="#077a9d"/>
<rect x="863.9" y="523.5" width="7.47" height="2.6" fill="#ffab00"/>
<rect x="863.9" y="526.6" width="7.47" height="16.1" fill="#077a9d"/>
<rect x="872.5" y="509.0" width="7.47" height="4.9" fill="#ffab00"/>
<rect x="872.5" y="514.4" width="7.47" height="28.3" fill="#077a9d"/>
<rect x="881.0" y="515.7" width="7.47" height="3.8" fill="#ffab00"/>
<rect x="881.0" y="520.1" width="7.47" height="22.6" fill="#077a9d"/>
<rect x="889.6" y="507.6" width="7.47" height="5.1" fill="#ffab00"/>
<rect x="889.6" y="513.2" width="7.47" height="29.5" fill="#077a9d"/>
<rect x="898.2" y="510.3" width="7.47" height="4.7" fill="#ffab00"/>
<rect x="898.2" y="515.5" width="7.47" height="27.2" fill="#077a9d"/>
<rect x="906.7" y="511.6" width="7.47" height="4.5" fill="#ffab00"/>
<rect x="906.7" y="516.6" width="7.47" height="26.1" fill="#077a9d"/>
<rect x="915.3" y="521.1" width="7.47" height="3.0" fill="#ffab00"/>
<rect x="915.3" y="524.5" width="7.47" height="18.2" fill="#077a9d"/>
<rect x="923.9" y="510.9" width="7.47" height="4.6" fill="#ffab00"/>
<rect x="923.9" y="516.0" width="7.47" height="26.7" fill="#077a9d"/>
<rect x="932.5" y="510.7" width="7.47" height="4.6" fill="#ffab00"/>
<rect x="932.5" y="515.8" width="7.47" height="26.9" fill="#077a9d"/>
<rect x="941.0" y="518.2" width="7.47" height="3.4" fill="#ffab00"/>
<rect x="941.0" y="522.1" width="7.47" height="20.6" fill="#077a9d"/>
<rect x="949.6" y="516.2" width="7.47" height="3.7" fill="#ffab00"/>
<rect x="949.6" y="520.5" width="7.47" height="22.2" fill="#077a9d"/>
<rect x="958.2" y="522.2" width="7.47" height="2.8" fill="#ffab00"/>
<rect x="958.2" y="525.5" width="7.47" height="17.2" fill="#077a9d"/>
<rect x="966.7" y="518.2" width="7.47" height="3.4" fill="#ffab00"/>
<rect x="966.7" y="522.1" width="7.47" height="20.6" fill="#077a9d"/>
<rect x="975.3" y="508.7" width="7.47" height="4.9" fill="#ffab00"/>
<rect x="975.3" y="514.1" width="7.47" height="28.6" fill="#077a9d"/>
<rect x="983.9" y="514.3" width="7.47" height="4.0" fill="#ffab00"/>
<rect x="983.9" y="518.8" width="7.47" height="23.9" fill="#077a9d"/>
<rect x="992.4" y="508.8" width="7.47" height="4.9" fill="#ffab00"/>
<rect x="992.4" y="514.2" width="7.47" height="28.5" fill="#077a9d"/>
<rect x="1001.0" y="520.2" width="7.47" height="3.1" fill="#ffab00"/>
<rect x="1001.0" y="523.8" width="7.47" height="18.9" fill="#077a9d"/>
<rect x="1009.6" y="507.5" width="7.47" height="5.1" fill="#ffab00"/>
<rect x="1009.6" y="513.1" width="7.47" height="29.6" fill="#077a9d"/>
<rect x="1018.2" y="522.8" width="7.47" height="2.7" fill="#ffab00"/>
<rect x="1018.2" y="526.0" width="7.47" height="16.7" fill="#077a9d"/>
<rect x="1026.7" y="506.9" width="7.47" height="5.2" fill="#ffab00"/>
<rect x="1026.7" y="512.6" width="7.47" height="30.1" fill="#077a9d"/>
<rect x="1035.3" y="512.4" width="7.47" height="4.4" fill="#ffab00"/>
<rect x="1035.3" y="517.2" width="7.47" height="25.5" fill="#077a9d"/>
<rect x="1043.9" y="519.8" width="7.47" height="3.2" fill="#ffab00"/>
<rect x="1043.9" y="523.4" width="7.47" height="19.3" fill="#077a9d"/>
<rect x="1052.4" y="514.0" width="7.47" height="4.1" fill="#ffab00"/>
<rect x="1052.4" y="518.6" width="7.47" height="24.1" fill="#077a9d"/>
<rect x="1061.0" y="521.9" width="7.47" height="2.8" fill="#ffab00"/>
<rect x="1061.0" y="525.3" width="7.47" height="17.4" fill="#077a9d"/>
<rect x="1069.6" y="508.7" width="7.47" height="4.9" fill="#ffab00"/>
<rect x="1069.6" y="514.1" width="7.47" height="28.6" fill="#077a9d"/>
<rect x="1078.1" y="509.1" width="7.47" height="4.9" fill="#ffab00"/>
<rect x="1078.1" y="514.5" width="7.47" height="28.2" fill="#077a9d"/>
<rect x="1086.7" y="518.5" width="7.47" height="3.4" fill="#ffab00"/>
<rect x="1086.7" y="522.4" width="7.47" height="20.3" fill="#077a9d"/>
<rect x="1095.3" y="511.0" width="7.47" height="4.6" fill="#ffab00"/>
<rect x="1095.3" y="516.1" width="7.47" height="26.6" fill="#077a9d"/>
<rect x="1103.9" y="510.7" width="7.47" height="4.6" fill="#ffab00"/>
<rect x="1103.9" y="515.8" width="7.47" height="26.9" fill="#077a9d"/>
<rect x="1112.4" y="516.2" width="7.47" height="3.7" fill="#ffab00"/>
<rect x="1112.4" y="520.5" width="7.47" height="22.2" fill="#077a9d"/>
<rect x="1121.0" y="507.7" width="7.47" height="5.1" fill="#ffab00"/>
<rect x="1121.0" y="513.3" width="7.47" height="29.4" fill="#077a9d"/>
<rect x="1129.6" y="520.6" width="7.47" height="3.0" fill="#ffab00"/>
<rect x="1129.6" y="524.1" width="7.47" height="18.6" fill="#077a9d"/>
<rect x="1138.1" y="515.9" width="7.47" height="3.8" fill="#ffab00"/>
<rect x="1138.1" y="520.2" width="7.47" height="22.5" fill="#077a9d"/>
<rect x="1146.7" y="512.7" width="7.47" height="4.3" fill="#ffab00"/>
<rect x="1146.7" y="517.5" width="7.47" height="25.2" fill="#077a9d"/>
<line x1="375" x2="1160.7" y1="542.7" y2="542.7" stroke="#cfd6db" stroke-width="1"/>
<text x="372.5" y="485.2" font-size="8.8" fill="#5f666b" text-anchor="end">5K</text>
<text x="372.5" y="545.9" font-size="8.8" fill="#5f666b" text-anchor="end">0</text>
<text x="400.8" y="558.5" font-size="8.8" fill="#5f666b" text-anchor="middle">Oct 01, 2023</text>
<text x="460.8" y="558.5" font-size="8.8" fill="#5f666b" text-anchor="middle">Oct 08, 2023</text>
<text x="520.8" y="558.5" font-size="8.8" fill="#5f666b" text-anchor="middle">Oct 15, 2023</text>
<text x="580.8" y="558.5" font-size="8.8" fill="#5f666b" text-anchor="middle">Oct 22, 2023</text>
<text x="640.8" y="558.5" font-size="8.8" fill="#5f666b" text-anchor="middle">Oct 29, 2023</text>
<text x="700.8" y="558.5" font-size="8.8" fill="#5f666b" text-anchor="middle">Nov 05, 2023</text>
<text x="760.8" y="558.5" font-size="8.8" fill="#5f666b" text-anchor="middle">Nov 12, 2023</text>
<text x="820.7" y="558.5" font-size="8.8" fill="#5f666b" text-anchor="middle">Nov 19, 2023</text>
<text x="880.7" y="558.5" font-size="8.8" fill="#5f666b" text-anchor="middle">Nov 26, 2023</text>
<text x="940.7" y="558.5" font-size="8.8" fill="#5f666b" text-anchor="middle">Dec 03, 2023</text>
<text x="1000.7" y="558.5" font-size="8.8" fill="#5f666b" text-anchor="middle">Dec 10, 2023</text>
<text x="1060.7" y="558.5" font-size="8.8" fill="#5f666b" text-anchor="middle">Dec 17, 2023</text>
<text x="1120.7" y="558.5" font-size="8.8" fill="#5f666b" text-anchor="middle">Dec 24, 2023</text>
<text x="769" y="569.3" font-size="9" font-weight="bold" fill="#3d454b" text-anchor="middle">Window</text>
<text transform="translate(356.8,506.5) rotate(-90)" font-size="9.7" font-weight="bold" fill="#3d454b" text-anchor="middle">Count distribu...</text>
<text x="349" y="585.3" font-size="9.2" font-weight="bold" fill="#3d454b">value:</text>
<rect x="392" y="578" width="8" height="8" fill="#077a9d"/>
<text x="403" y="585.3" font-size="8.8" fill="#5f666b">&lt;=50K</text>
<rect x="445" y="578" width="8" height="8" fill="#ffab00"/>
<text x="457" y="585.3" font-size="8.8" fill="#5f666b">&gt;50K</text>
<rect x="393.1" y="685.1" width="361.1" height="74.0" fill="#fde725"/>
<rect x="754.2" y="685.1" width="361.0" height="74.0" fill="#46317e"/>
<rect x="393.1" y="759.1" width="361.1" height="73.7" fill="#f4e61e"/>
<rect x="754.2" y="759.1" width="361.0" height="73.7" fill="#440154"/>
<rect x="393.1" y="832.8" width="361.1" height="73.7" fill="#46327e"/>
<rect x="754.2" y="832.8" width="361.0" height="73.7" fill="#481b6d"/>
<text x="388.5" y="799.5" font-size="8.8" fill="#5f666b" text-anchor="end">&lt;=50K</text>
<text x="388.5" y="873.4" font-size="8.8" fill="#5f666b" text-anchor="end">&gt;50K</text>
<text transform="translate(357.3,796) rotate(-90)" font-size="9.2" font-weight="bold" fill="#3d454b" text-anchor="middle">label</text>
<text x="573.6" y="919.6" font-size="8.8" fill="#5f666b" text-anchor="middle">&lt;=50K</text>
<text x="934.7" y="919.6" font-size="8.8" fill="#5f666b" text-anchor="middle">&gt;50K</text>
<text x="754.2" y="930.5" font-size="9.2" font-weight="bold" fill="#3d454b" text-anchor="middle">prediction</text>
<defs><linearGradient id="vir" x1="0" y1="1" x2="0" y2="0"><stop offset="0.000" stop-color="#440154"/><stop offset="0.111" stop-color="#482878"/><stop offset="0.222" stop-color="#3e4989"/><stop offset="0.333" stop-color="#31688e"/><stop offset="0.444" stop-color="#26828e"/><stop offset="0.556" stop-color="#1f9e89"/><stop offset="0.667" stop-color="#35b779"/><stop offset="0.778" stop-color="#6ece58"/><stop offset="0.889" stop-color="#b5de2b"/><stop offset="1.000" stop-color="#fde725"/></linearGradient></defs>
<rect x="1128.7" y="698.8" width="11.7" height="147.3" fill="url(#vir)"/>
<text x="1129" y="693.3" font-size="9.2" font-weight="bold" fill="#3d454b">count</text>
<text x="1142.3" y="715.5" font-size="8.8" fill="#5f666b">2K</text>
<text x="1142.3" y="751.8" font-size="8.8" fill="#5f666b">1.5K</text>
<text x="1142.3" y="788.1" font-size="8.8" fill="#5f666b">1K</text>
<text x="1142.3" y="824.4" font-size="8.8" fill="#5f666b">500</text>
</svg>
<div id="vscroll" class="abs"></div>
<div class="abs" style="left:1194px;top:67px;width:5px;height:126px;border-radius:3px;background:#c1c1c1"></div>
</body></html>
